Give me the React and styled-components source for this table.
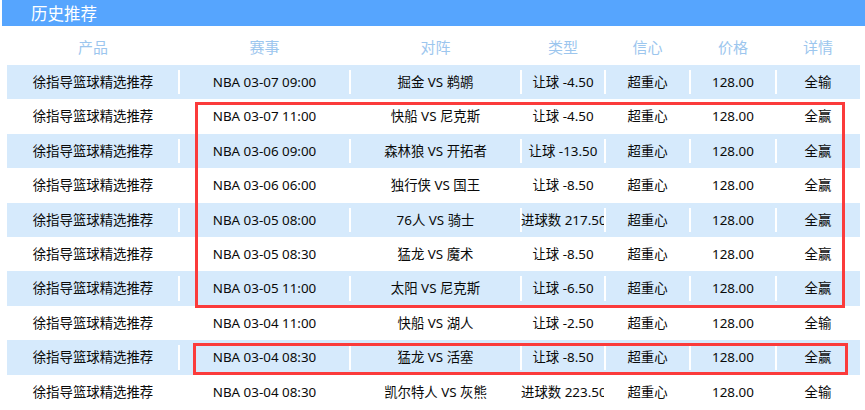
import React from "react";
import styled, { createGlobalStyle } from "styled-components";

const GlobalStyle = createGlobalStyle`
  html, body { margin: 0; padding: 0; background: #fff; }
  body { font-family: "Noto Sans", "Noto Sans CJK SC", sans-serif; }
`;

const Page = styled.div`
  position: relative;
  width: 865px;
  height: 410px;
  overflow: hidden;
`;

const TitleBar = styled.div`
  margin-left: 2px;
  height: 26px;
  background: #56a5fe;
  color: #fff;
  font-family: "Noto Sans CJK SC", sans-serif;
  font-size: 16.5px;
  line-height: 26px;
  padding-left: 29px;
`;

const Table = styled.div`
  margin-left: 7px;
  width: 853px;
`;

const COLS = "172px 171px 171px 84px 85px 86px 84px";

const HeadRow = styled.div`
  display: grid;
  grid-template-columns: ${COLS};
  height: 39px;
  align-items: center;
`;

const HeadCell = styled.div`
  text-align: center;
  color: #9cc6ee;
  font-family: "Noto Sans CJK SC", sans-serif;
  font-size: 15px;
  padding-top: 1px;
`;

const Row = styled.div`
  display: grid;
  grid-template-columns: ${COLS};
  height: 34.4px;
  align-items: center;
  background: ${(p) => (p.$shaded ? "#d6eafc" : "#fff")};
`;

const Cell = styled.div`
  position: relative;
  height: 100%;
  line-height: 34px;
  text-align: center;
  white-space: nowrap;
  font-size: 13.4px;
  color: #0a0a0a;
  &::after {
    content: "";
    display: ${(p) => (p.$last ? "none" : "block")};
    position: absolute;
    right: -1px;
    top: 5px;
    bottom: 5px;
    width: 2px;
    background: #fff;
  }
`;

const Clip = styled.div`
  overflow: hidden;
  height: 100%;
`;

const Highlight = styled.div`
  position: absolute;
  border: 3px solid #fb3b3b;
  box-sizing: border-box;
  pointer-events: none;
`;

const headers = ["产品", "赛事", "对阵", "类型", "信心", "价格", "详情"];

const rows = [
  ["NBA 03-07 09:00", "掘金 VS 鹈鹕", "让球 -4.50", "全输"],
  ["NBA 03-07 11:00", "快船 VS 尼克斯", "让球 -4.50", "全赢"],
  ["NBA 03-06 09:00", "森林狼 VS 开拓者", "让球 -13.50", "全赢"],
  ["NBA 03-06 06:00", "独行侠 VS 国王", "让球 -8.50", "全赢"],
  ["NBA 03-05 08:00", "76人 VS 骑士", "进球数 217.50", "全赢"],
  ["NBA 03-05 08:30", "猛龙 VS 魔术", "让球 -8.50", "全赢"],
  ["NBA 03-05 11:00", "太阳 VS 尼克斯", "让球 -6.50", "全赢"],
  ["NBA 03-04 11:00", "快船 VS 湖人", "让球 -2.50", "全输"],
  ["NBA 03-04 08:30", "猛龙 VS 活塞", "让球 -8.50", "全赢"],
  ["NBA 03-04 08:30", "凯尔特人 VS 灰熊", "进球数 223.50", "全输"],
];

export default function App() {
  return (
    <Page>
      <GlobalStyle />
      <TitleBar>历史推荐</TitleBar>
      <Table>
        <HeadRow>
          {headers.map((h) => (
            <HeadCell key={h}>{h}</HeadCell>
          ))}
        </HeadRow>
        {rows.map((r, i) => {
          const cells = ["徐指导篮球精选推荐", r[0], r[1], r[2], "超重心", "128.00", r[3]];
          return (
            <Row key={i} $shaded={i % 2 === 0}>
              {cells.map((c, j) => (
                <Cell key={j} $last={j === cells.length - 1}>
                  <Clip>{c}</Clip>
                </Cell>
              ))}
            </Row>
          );
        })}
      </Table>
      <Highlight style={{ left: 195, top: 102, width: 650, height: 206 }} />
      <Highlight style={{ left: 193, top: 343, width: 655, height: 32 }} />
    </Page>
  );
}
